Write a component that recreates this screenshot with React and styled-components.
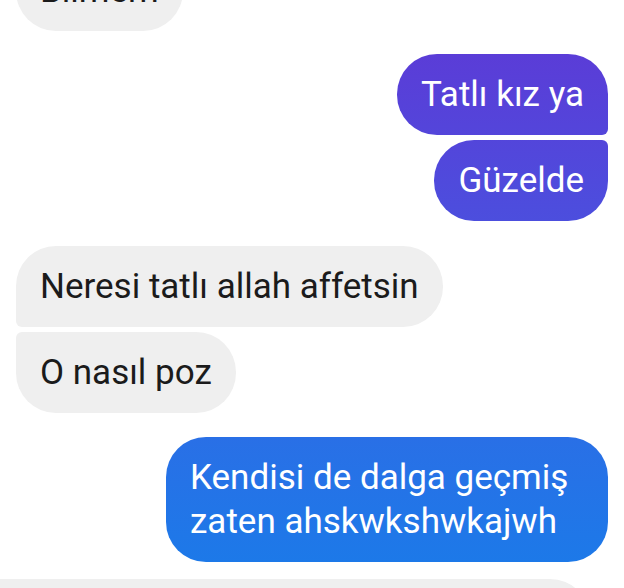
import React from "react";
import styled, { createGlobalStyle, css } from "styled-components";

const GlobalStyle = createGlobalStyle`
	html, body {
		margin: 0;
		padding: 0;
		background: #fff;
		overflow: hidden;
	}
	body {
		font-family: Roboto, "Noto Sans", Arial, sans-serif;
	}
`;

const Screen = styled.div`
	width: 624px;
	height: 588px;
	overflow: hidden;
	background: #fff;
`;

// scrolled thread: the first bubble is partly above the top edge
const Thread = styled.div`
	display: flex;
	flex-direction: column;
	padding: 0 16px;
	margin-top: -50px;
`;

const Group = styled.div`
	display: flex;
	flex-direction: column;
	align-items: ${({ mine }) => (mine ? "flex-end" : "flex-start")};
	gap: 5px;
	margin-top: ${({ gap }) => gap || 0}px;
`;

const BIG = 40;
const SMALL = 6;

const radius = ({ mine, first, last }) => {
	const top = first ? BIG : SMALL;
	const bottom = last ? BIG : SMALL;
	return mine
		? `${BIG}px ${top}px ${bottom}px ${BIG}px`
		: `${top}px ${BIG}px ${BIG}px ${bottom}px`;
};

const Bubble = styled.div`
	box-sizing: border-box;
	max-width: 442px;
	padding: 18.5px 24px;
	font-size: 35px;
	line-height: 44px;
	border-radius: ${radius};
	${({ mine }) =>
		mine
			? css`
					color: #fff;
					background: linear-gradient(
						180deg,
						#5f37d5 0px,
						#4b4fde 230px,
						#2a6fe6 430px,
						#1a7be9 588px
					);
					background-attachment: fixed;
			  `
			: css`
					color: #1b1b1b;
					background: #efefef;
			  `}
	${({ wide }) =>
		wide &&
		css`
			margin-left: -16px;
			width: 590px;
			max-width: none;
			border-radius: 0 ${BIG}px 0 0;
		`}
`;

const groups = [
	{ mine: false, gap: 0, items: ["Bilmem"] },
	{ mine: true, gap: 23, items: ["Tatlı kız ya", "Güzelde"] },
	{ mine: false, gap: 25, items: ["Neresi tatlı allah affetsin", "O nasıl poz"] },
	{ mine: true, gap: 24, items: ["Kendisi de dalga geçmiş zaten ahskwkshwkajwh"] },
];

export default function App() {
	return (
		<Screen>
			<GlobalStyle />
			<Thread>
				{groups.map((g, gi) => (
					<Group key={gi} mine={g.mine} gap={g.gap}>
						{g.items.map((text, i) => (
							<Bubble
								key={i}
								mine={g.mine}
								first={i === 0}
								last={i === g.items.length - 1}
							>
								{text}
							</Bubble>
						))}
					</Group>
				))}
				<Group gap={17}>
					<Bubble wide>&nbsp;</Bubble>
				</Group>
			</Thread>
		</Screen>
	);
}
